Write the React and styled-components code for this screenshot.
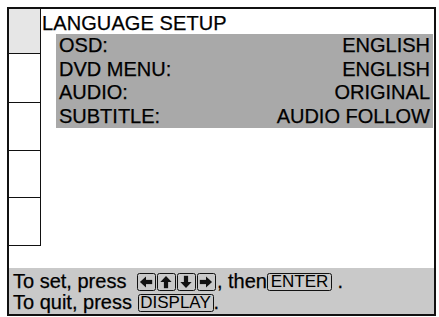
import React from "react";
import styled, { createGlobalStyle } from "styled-components";

const Global = createGlobalStyle`
  html, body {
    margin: 0;
    padding: 0;
    background: #ffffff;
  }
  body {
    font-family: "Liberation Sans", Arial, sans-serif;
    color: #000;
    -webkit-text-stroke: 0.25px #000;
  }
`;

const Frame = styled.div`
  margin: 7px 0 0 7px;
  width: 429px;
  height: 309px;
  box-sizing: border-box;
  border: 2px solid #111;
  display: flex;
  flex-direction: column;
  background: #fff;
`;

const Top = styled.div`
  flex: 1;
  display: flex;
`;

const Sidebar = styled.div`
  width: 32px;
  display: flex;
  flex-direction: column;
`;

const Cell = styled.div`
  height: ${(p) => p.h}px;
  border-right: 1.5px solid #111;
  border-bottom: 1.5px solid #111;
  background: ${(p) => (p.active ? "#e6e6e6" : "#fff")};
`;

const Main = styled.div`
  flex: 1;
  display: flex;
  flex-direction: column;
  padding-left: 1px;
`;

const Title = styled.div`
  font-size: 20px;
  line-height: 21px;
  padding-top: 4px;
  height: 21px;
  letter-spacing: 0.1px;
`;

const Options = styled.div`
  margin-left: 14px;
  margin-right: 1px;
  background: #a9a9a9;
  padding: 0 3px 0 3px;
`;

const Row = styled.div`
  display: flex;
  justify-content: space-between;
  font-size: 20px;
  line-height: 23.5px;
  height: 23.5px;
`;

const Footer = styled.div`
  height: 46px;
  background: #c9c9c9;
  padding: 3px 0 0 4px;
  box-sizing: border-box;
  font-size: 20px;
`;

const Line = styled.div`
  display: flex;
  align-items: center;
  height: 21px;
  line-height: 21px;
  white-space: pre;
`;

const Keys = styled.span`
  display: inline-flex;
  gap: 1px;
  margin: 0 1px 0 5px;
`;

const Key = styled.span`
  display: inline-flex;
  align-items: center;
  justify-content: center;
  box-sizing: border-box;
  width: ${(p) => p.w || 19}px;
  height: 18px;
  border: 1.4px solid #111;
  border-radius: 2.5px;
  font-size: 17px;
  line-height: 17px;
  -webkit-text-stroke: 0;
`;

const ArrowIcon = ({ dir }) => {
  const rot = { left: 0, up: 90, down: 270, right: 180 }[dir];
  return (
    <svg width="14" height="14" viewBox="0 0 12 12">
      <g transform={`rotate(${rot} 6 6)`}>
        <polygon points="0.8,6 6,1.2 6,10.8" fill="#111" />
        <rect x="5.5" y="4.2" width="5.8" height="3.6" fill="#111" />
      </g>
    </svg>
  );
};

const rows = [
  ["OSD:", "ENGLISH"],
  ["DVD MENU:", "ENGLISH"],
  ["AUDIO:", "ORIGINAL"],
  ["SUBTITLE:", "AUDIO FOLLOW"],
];

const cells = [44, 47.5, 47, 46.5, 47];

export default function App() {
  return (
    <>
      <Global />
      <Frame>
        <Top>
          <Sidebar>
            {cells.map((h, i) => (
              <Cell key={i} h={h} active={i === 0} />
            ))}
          </Sidebar>
          <Main>
            <Title>LANGUAGE SETUP</Title>
            <Options>
              {rows.map(([label, value]) => (
                <Row key={label}>
                  <span>{label}</span>
                  <span>{value}</span>
                </Row>
              ))}
            </Options>
          </Main>
        </Top>
        <Footer>
          <Line>
            {"To set, press "}
            <Keys>
              <Key><ArrowIcon dir="left" /></Key>
              <Key><ArrowIcon dir="up" /></Key>
              <Key><ArrowIcon dir="down" /></Key>
              <Key><ArrowIcon dir="right" /></Key>
            </Keys>
            {", then"}
            <Key w={65}>ENTER</Key>
            {" ."}
          </Line>
          <Line>
            {"To quit, press "}
            <Key w={76}>DISPLAY</Key>
            {"."}
          </Line>
        </Footer>
      </Frame>
    </>
  );
}
